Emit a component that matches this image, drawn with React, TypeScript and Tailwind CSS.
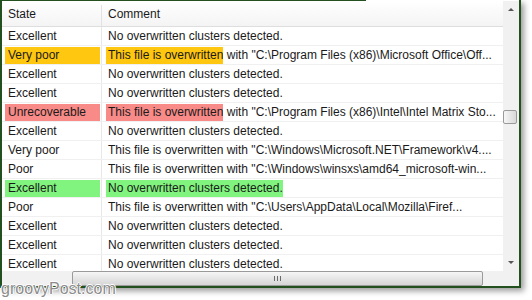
import React from "react";

type Row = {
  state: string;
  hl?: string;
  hlText?: string;
  rest: string;
};

const NO = "No overwritten clusters detected.";
const OW = "This file is overwritten";

const rows: Row[] = [
  { state: "Excellent", rest: NO },
  { state: "Very poor", hl: "bg-[#ffc70f]", hlText: OW, rest: ' with "C:\\Program Files (x86)\\Microsoft Office\\Off...' },
  { state: "Excellent", rest: NO },
  { state: "Excellent", rest: NO },
  { state: "Unrecoverable", hl: "bg-[#f88a88]", hlText: OW, rest: ' with "C:\\Program Files (x86)\\Intel\\Intel Matrix Sto...' },
  { state: "Excellent", rest: NO },
  { state: "Very poor", rest: OW + ' with "C:\\Windows\\Microsoft.NET\\Framework\\v4....' },
  { state: "Poor", rest: OW + ' with "C:\\Windows\\winsxs\\amd64_microsoft-win...' },
  { state: "Excellent", hl: "bg-[#80f47e]", hlText: NO, rest: "" },
  { state: "Poor", rest: OW + ' with "C:\\Users\\AppData\\Local\\Mozilla\\Firef...' },
  { state: "Excellent", rest: NO },
  { state: "Excellent", rest: NO },
  { state: "Excellent", rest: NO },
];

export default function App() {
  return (
    <div className="relative w-[532px] h-[300px] bg-white overflow-hidden font-['Liberation_Sans',Arial,sans-serif] text-[12px] text-[#1a1a1a]">
      <div className="w-[521px] h-[288px] flex flex-col border-l-2 border-r-2 border-b-2 border-[#23501f] shadow-[3px_3px_6px_rgba(0,0,0,0.4)]">
        <div className="h-[1px] w-[364px] bg-[#23501f] shrink-0" />
        <div className="flex flex-1 min-h-0">
          <div className="flex flex-col w-[501px]">
            {/* header */}
            <div className="flex h-[26px] shrink-0 bg-gradient-to-b from-white to-[#f4f4f4] border-b border-[#dedede]">
              <div className="w-[100px] pl-[6px] flex items-center border-r border-[#e2e2e2] mt-[4px] pb-[4px]">
                State
              </div>
              <div className="flex-1 pl-[6px] flex items-center">Comment</div>
            </div>
            {/* body */}
            <div className="flex-1 min-h-0 overflow-hidden">
              {rows.map((r, i) => (
                <div key={i} className="flex h-[19px] border-b border-[#f0f0f0]">
                  <div className="w-[100px] shrink-0 border-r border-[#e8e8e8] flex items-center">
                    <span
                      className={
                        "ml-[3px] w-[95px] h-[17px] leading-[17px] pl-[3px] " +
                        (r.hl ? r.hl : "")
                      }
                    >
                      {r.state}
                    </span>
                  </div>
                  <div className="flex-1 min-w-0 flex items-center overflow-hidden whitespace-pre pl-[4px]">
                    {r.hlText ? (
                      <span className={"h-[17px] leading-[17px] pl-[2px] whitespace-pre " + r.hl}>{r.hlText}</span>
                    ) : null}
                    <span className={"h-[17px] leading-[17px] whitespace-pre " + (r.hlText ? "" : "pl-[2px]")}>
                      {r.rest}
                    </span>
                  </div>
                </div>
              ))}
            </div>
            {/* horizontal scrollbar */}
            <div className="h-[15px] shrink-0 bg-[#f1f1f1] flex items-stretch">
              <div className="ml-[70px] w-[411px] rounded-[2px] border border-[#9a9a9a] bg-gradient-to-b from-[#f6f6f6] to-[#d6d6d6] flex items-center justify-center gap-[2px]">
                <div className="w-[1px] h-[5px] bg-[#6a6a6a]" />
                <div className="w-[1px] h-[5px] bg-[#6a6a6a]" />
                <div className="w-[1px] h-[5px] bg-[#6a6a6a]" />
              </div>
            </div>
          </div>
          {/* vertical scrollbar */}
          <div className="w-[16px] flex flex-col bg-[#f1f1f1]">
            <div className="h-[17px] shrink-0 flex items-center justify-center">
              <div className="w-0 h-0 border-x-[3px] border-x-transparent border-b-[3px] border-b-[#555]" />
            </div>
            <div className="flex-1 flex flex-col">
              <div className="mt-[92px] ml-0 w-[14px] h-[14px] rounded-[2px] border border-[#9a9a9a] bg-gradient-to-r from-[#f6f6f6] to-[#d8d8d8]" />
            </div>
            <div className="h-[17px] shrink-0 flex items-center justify-center">
              <div className="w-0 h-0 border-x-[3px] border-x-transparent border-t-[3px] border-t-[#555]" />
            </div>
            <div className="h-[15px] shrink-0 bg-[#f1f1f1]" />
          </div>
        </div>
      </div>
      <div className="absolute left-[1px] top-[281px] text-[16px] leading-[16px] text-[#8c8c8c] [text-shadow:1px_0_0_#fff,-1px_0_0_#fff,0_1px_0_#fff,0_-1px_0_#fff]">
        groovyPost.com
      </div>
    </div>
  );
}
